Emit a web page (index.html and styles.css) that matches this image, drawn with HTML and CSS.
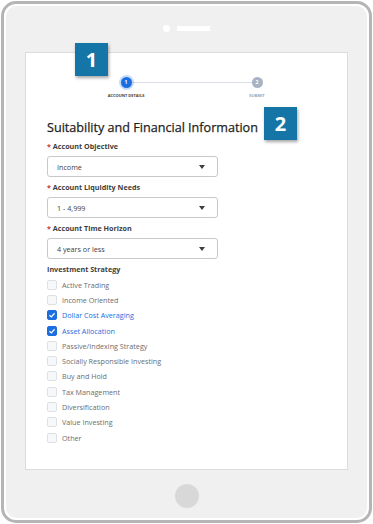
FILE: index.html
```html
<!DOCTYPE html>
<html lang="en">
<head>
    <meta charset="UTF-8">
    <meta name="viewport" content="width=device-width, initial-scale=1.0">
    <title>Suitability and Financial Information</title>
    <link rel="stylesheet" href="styles.css">
</head>
<body>
    <div class="device">
        <div class="bezel">
            <div class="camera">
                <span class="lens"></span>
                <span class="speaker"></span>
            </div>

            <div class="screen">
                <div class="steps">
                    <div class="step active">
                        <span class="dot">1</span>
                        <span class="step-label">Account Details</span>
                    </div>
                    <div class="step">
                        <span class="dot">2</span>
                        <span class="step-label">Submit</span>
                    </div>
                </div>

                <h1 class="title">Suitability and Financial Information</h1>

                <div class="field">
                    <label class="field-label"><abbr>*</abbr> Account Objective</label>
                    <div class="select">
                        <span>Income</span>
                        <svg class="caret" width="6" height="4" viewBox="0 0 6 4"><path d="M0 0h6L3 4z"/></svg>
                    </div>
                </div>
                <div class="field">
                    <label class="field-label"><abbr>*</abbr> Account Liquidity Needs</label>
                    <div class="select">
                        <span>1 - 4,999</span>
                        <svg class="caret" width="6" height="4" viewBox="0 0 6 4"><path d="M0 0h6L3 4z"/></svg>
                    </div>
                </div>
                <div class="field">
                    <label class="field-label"><abbr>*</abbr> Account Time Horizon</label>
                    <div class="select">
                        <span>4 years or less</span>
                        <svg class="caret" width="6" height="4" viewBox="0 0 6 4"><path d="M0 0h6L3 4z"/></svg>
                    </div>
                </div>

                <div class="group-label">Investment Strategy</div>
                <ul class="checks">
                    <li><span class="box"></span>Active Trading</li>
                    <li><span class="box"></span>Income Oriented</li>
                    <li class="checked"><span class="box"><svg width="8" height="8" viewBox="0 0 8 8"><path d="M1.5 4.2l1.8 1.7 3.3-3.6"/></svg></span>Dollar Cost Averaging</li>
                    <li class="checked"><span class="box"><svg width="8" height="8" viewBox="0 0 8 8"><path d="M1.5 4.2l1.8 1.7 3.3-3.6"/></svg></span>Asset Allocation</li>
                    <li><span class="box"></span>Passive/Indexing Strategy</li>
                    <li><span class="box"></span>Socially Responsible Investing</li>
                    <li><span class="box"></span>Buy and Hold</li>
                    <li><span class="box"></span>Tax Management</li>
                    <li><span class="box"></span>Diversification</li>
                    <li><span class="box"></span>Value Investing</li>
                    <li><span class="box"></span>Other</li>
                </ul>
            </div>

            <div class="home"></div>
        </div>
    </div>

    <!-- callout badges -->
    <div class="badge badge-one">1</div>
    <div class="badge badge-two">2</div>
</body>
</html>
```

FILE: styles.css
```css
* {
    box-sizing: border-box;
}
body {
    margin: 0;
    position: relative;
    width: 373px;
    height: 524px;
    background: #fff;
    font-family: "Open Sans", "Liberation Sans", sans-serif;
    color: #3e3e3c;
}
.device {
    margin: 1px 0 0 1px;
    width: 371px;
    height: 522px;
    border: 3px solid #b5b5b5;
    border-radius: 15px;
    padding: 2px;
    background: #fff;
}
.bezel {
    height: 100%;
    background: #f0f0f0;
    border-radius: 11px;
    display: flex;
    flex-direction: column;
    align-items: center;
    padding-top: 19px;
}
.camera {
    display: flex;
    align-items: center;
    gap: 7px;
    height: 7px;
    margin-bottom: 20px;
}
.lens {
    width: 7px;
    height: 7px;
    border-radius: 50%;
    background: #fff;
}
.speaker {
    width: 33px;
    height: 5px;
    background: #fff;
}
.screen {
    width: 323px;
    height: 418px;
    background: #fff;
    border: 1px solid #dcdcdc;
    padding: 24px 20px 0 21px;
}
.home {
    margin-top: 14px;
    width: 24px;
    height: 24px;
    border-radius: 50%;
    background: #d8d8d8;
}

/* progress */
.steps {
    position: relative;
    display: flex;
    justify-content: space-between;
    width: 191px;
    margin-left: 49px;
}
.steps::before {
    content: "";
    position: absolute;
    left: 30px;
    right: 30px;
    top: 5px;
    height: 1px;
    background: #d8dde6;
}
.step {
    position: relative;
    width: 60px;
    display: flex;
    flex-direction: column;
    align-items: center;
}
.dot {
    width: 11px;
    height: 11px;
    border-radius: 50%;
    background: #a8b3c4;
    color: #fff;
    font-size: 5px;
    font-weight: 700;
    line-height: 11px;
    text-align: center;
}
.step.active .dot {
    background: #1b6ee0;
    box-shadow: 0 0 0 2px rgba(27, 110, 224, 0.25);
}
.step-label {
    margin-top: 5px;
    font-size: 4px;
    line-height: 6px;
    font-weight: 700;
    text-transform: uppercase;
    color: #9aa3ae;
}
.step.active .step-label {
    color: #3e3e3c;
}

.title {
    margin: 20px 0 4px;
    font-size: 12.6px;
    line-height: 18px;
    font-weight: 400;
    color: #1e1e1e;
    -webkit-text-stroke: 0.25px #1e1e1e;
}

/* fields */
.field {
    margin-bottom: 5px;
}
.field-label {
    display: block;
    font-size: 7.2px;
    line-height: 10px;
    font-weight: 700;
    margin-bottom: 5px;
}
.field-label abbr {
    color: #c23934;
}
.select {
    display: flex;
    align-items: center;
    justify-content: space-between;
    width: 171px;
    height: 21px;
    border: 1px solid #c9c9c9;
    border-radius: 3px;
    padding: 0 12px 0 9px;
    font-size: 7.2px;
}
.caret {
    fill: #3e3e3c;
}

.group-label {
    margin-top: 5px;
    font-size: 7.2px;
    line-height: 10px;
    font-weight: 700;
}
.checks {
    list-style: none;
    margin: 3px 0 0;
    padding: 0;
}
.checks li {
    display: flex;
    align-items: center;
    height: 15.3px;
    font-size: 7.2px;
    color: #6b6d70;
}
.box {
    width: 10px;
    height: 10px;
    margin-right: 5px;
    border: 1px solid #dde1e6;
    border-radius: 2px;
    background: #f7f8f9;
    display: flex;
    align-items: center;
    justify-content: center;
}
.checks li.checked {
    color: #1b6ee0;
}
.checked .box {
    background: #1b6ee0;
    border-color: #1b6ee0;
}
.box svg {
    fill: none;
    stroke: #fff;
    stroke-width: 1.3;
}

/* callouts */
.badge {
    position: absolute;
    width: 33px;
    height: 33px;
    background: #1475a6;
    color: #fff;
    font-size: 20px;
    font-weight: 700;
    line-height: 33px;
    text-align: center;
    box-shadow: 1px 2px 3px rgba(0, 0, 0, 0.35);
}
.badge-one {
    left: 75px;
    top: 43px;
}
.badge-two {
    left: 264px;
    top: 107px;
}
```
